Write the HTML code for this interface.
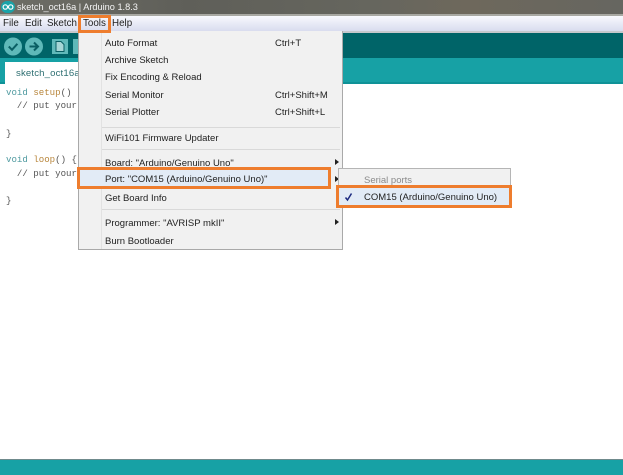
<!DOCTYPE html>
<html><head><meta charset="utf-8"><style>
html,body{margin:0;padding:0}
body{width:623px;height:475px;overflow:hidden;position:relative;background:#fff;font-family:"Liberation Sans",sans-serif}
#w{position:absolute;left:0;top:0;width:623px;height:475px;filter:blur(.35px)}
#w div{position:absolute}
.t{position:absolute;white-space:nowrap;font-size:9.5px;line-height:12px;color:#222;margin-top:1px}
.c{position:absolute;white-space:pre;font-family:"Liberation Mono",monospace;font-size:9.1px;line-height:12px;color:#555}
.k{color:#4f9aa0}.f{color:#b8863c}
#w .o{position:absolute;box-sizing:border-box;border:3px solid #ee7d2e}
#w .sep{position:absolute;left:102px;width:238px;height:1px;background:#d9d9d9}
#w .ar{position:absolute;width:0;height:0;border-left:4px solid #222;border-top:3px solid transparent;border-bottom:3px solid transparent}
</style></head><body><div id="w">
<div style="left:0;top:0;width:623px;height:14px;background:linear-gradient(90deg,#6e6e66,#5f5f59 30%,#66665e 60%,#6e685c 75%,#666660)"></div>
<div style="left:0;top:14px;width:623px;height:2px;background:#a8a8a2"></div>
<div style="left:0;top:16px;width:623px;height:15px;background:linear-gradient(#f8f9fd,#d9dcee)"></div>
<div style="left:0;top:31px;width:623px;height:2px;background:#c6c8cc"></div>
<div style="left:0;top:33px;width:623px;height:25px;background:#006468"></div>
<div style="left:0;top:58px;width:623px;height:25px;background:#17a1a5"></div>
<div style="left:0;top:82px;width:623px;height:2px;background:#0f9297"></div>
<div style="left:0;top:459px;width:623px;height:1px;background:#6f8a8c"></div>
<div style="left:0;top:460px;width:623px;height:15px;background:#17a1a5"></div>

<svg style="position:absolute;left:1px;top:1px" width="14" height="12" viewBox="0 0 14 12"><rect x="0" y="0" width="14" height="12" rx="6" fill="#1aa3a8"/><circle cx="4.3" cy="6" r="2.2" fill="none" stroke="#fff" stroke-width="1.2"/><circle cx="9.700" cy="6" r="2.2" fill="none" stroke="#fff" stroke-width="1.2"/></svg>
<span class="t" style="left:17px;top:0;color:#f4f4f4;font-size:9.2px">sketch_oct16a | Arduino 1.8.3</span>

<span class="t" style="left:3px;top:17px;font-size:9.8px">File</span>
<span class="t" style="left:25px;top:17px;font-size:9.8px">Edit</span>
<span class="t" style="left:47px;top:17px;font-size:9.8px">Sketch</span>
<span class="t" style="left:83px;top:17px;font-size:9.8px">Tools</span>
<span class="t" style="left:112px;top:17px;font-size:9.8px">Help</span>

<svg style="position:absolute;left:0;top:33px" width="80" height="25" viewBox="0 0 80 25">
<circle cx="13" cy="13.500" r="9" fill="#5fb9b9"/><path d="M8.800 13.500l3.200 3.300 5.400-6" fill="none" stroke="#0a5f64" stroke-width="2"/>
<circle cx="34" cy="13.500" r="9" fill="#5fb9b9"/><path d="M29.500 13.500h8M34 9.500l4 4-4 4" fill="none" stroke="#0a5f64" stroke-width="2"/>
<rect x="52" y="6" width="16" height="15" fill="#5fb9b9"/><path d="M56 8.500h5l3 3v7h-8z" fill="#a6d6d6" stroke="#0a5f64" stroke-width="1"/>
<rect x="73" y="6" width="7" height="15" fill="#5fb9b9"/>
</svg>

<div style="left:5px;top:62px;width:75px;height:22px;background:#fff"></div>
<span class="t" style="left:16px;top:67px;color:#2e6f72;font-size:9.6px;letter-spacing:.15px">sketch_oct16a</span>

<span class="c" style="left:6px;top:87px"><span class="k">void</span> <span class="f">setup</span>()</span>
<span class="c" style="left:6px;top:100px">  // put your</span>
<span class="c" style="left:6px;top:128px">}</span>
<span class="c" style="left:6px;top:154px"><span class="k">void</span> <span class="f">loop</span>() {</span>
<span class="c" style="left:6px;top:168px">  // put your</span>
<span class="c" style="left:6px;top:195px">}</span>

<!-- tools menu -->
<div style="left:78px;top:31px;width:263px;height:218px;background:#f1f1f1;border:1px solid #a9a9a9;border-top:none"></div>
<div style="left:101px;top:31px;width:1px;height:218px;background:#e2e2e2"></div>
<div style="left:80px;top:169px;width:249px;height:17px;background:#e2ebf6"></div>
<div class="sep" style="top:127px"></div>
<div class="sep" style="top:149px"></div>
<div class="sep" style="top:209px"></div>

<span class="t" style="left:105px;top:37px">Auto Format</span>
<span class="t" style="left:275px;top:37px">Ctrl+T</span>
<span class="t" style="left:105px;top:54px">Archive Sketch</span>
<span class="t" style="left:105px;top:71px">Fix Encoding &amp; Reload</span>
<span class="t" style="left:105px;top:89px">Serial Monitor</span>
<span class="t" style="left:275px;top:89px">Ctrl+Shift+M</span>
<span class="t" style="left:105px;top:106px">Serial Plotter</span>
<span class="t" style="left:275px;top:106px">Ctrl+Shift+L</span>
<span class="t" style="left:105px;top:132px">WiFi101 Firmware Updater</span>
<span class="t" style="left:105px;top:157px">Board: "Arduino/Genuino Uno"</span>
<span class="t" style="left:105px;top:173px">Port: "COM15 (Arduino/Genuino Uno)"</span>
<span class="t" style="left:105px;top:192px">Get Board Info</span>
<span class="t" style="left:105px;top:217px">Programmer: "AVRISP mkII"</span>
<span class="t" style="left:105px;top:235px">Burn Bootloader</span>
<div class="ar" style="left:335px;top:159px"></div>
<div class="ar" style="left:335px;top:176px"></div>
<div class="ar" style="left:335px;top:219px"></div>

<!-- submenu -->
<div style="left:338px;top:168px;width:171px;height:38px;background:#f1f1f1;border:1px solid #b5b5b5"></div>
<div style="left:339px;top:188px;width:170px;height:17px;background:#e2ebf6"></div>
<span class="t" style="left:364px;top:174px;color:#8a8a8a">Serial ports</span>
<span class="t" style="left:364px;top:191px">COM15 (Arduino/Genuino Uno)</span>
<svg style="position:absolute;left:344px;top:192px" width="10" height="10" viewBox="0 0 10 10"><path d="M1.500 5.500l2 2.500 4-6.500" fill="none" stroke="#1c2a80" stroke-width="1.500"/></svg>

<!-- orange boxes -->
<div class="o" style="left:78px;top:15px;width:33px;height:18px"></div>
<div class="o" style="left:77px;top:167px;width:254px;height:22px"></div>
<div class="o" style="left:336px;top:185px;width:176px;height:23px"></div>
</div></body></html>
